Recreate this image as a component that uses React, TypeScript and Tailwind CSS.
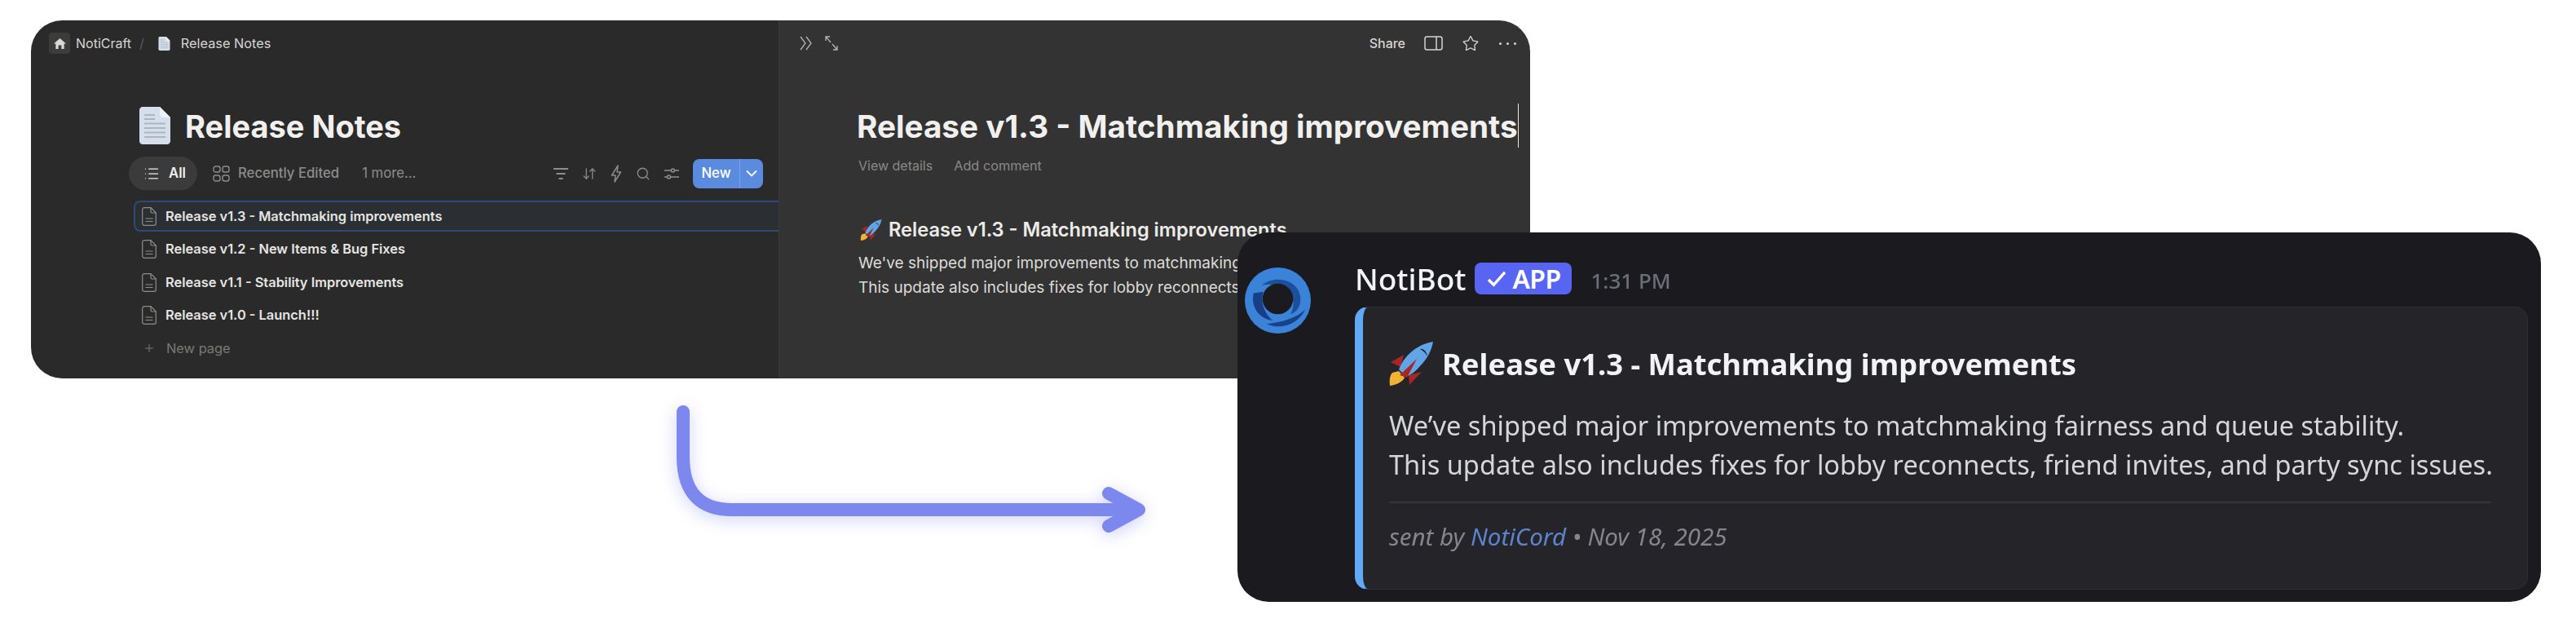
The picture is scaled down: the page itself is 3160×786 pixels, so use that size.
import React from "react";
import { ArrowDownUp, List, Plus, Search, Star } from "lucide-react";

const PageGlyph: React.FC<{ className: string }> = ({ className }) => (
  <svg viewBox="0 0 38 46" className={className}>
    <path d="M4 0H25L38 13V42C38 44.2 36.2 46 34 46H4C1.8 46 0 44.2 0 42V4C0 1.8 1.8 0 4 0Z" fill="#d5dee9" />
    <path d="M25 0L38 13H29C26.8 13 25 11.2 25 9V0Z" fill="#eef2f7" />
    <path d="M6 10H19M6 15H19M6 20.5H32M6 26H32M6 31.5H32M6 37H32" stroke="#aab6c6" strokeWidth="2" />
  </svg>
);

const RowDoc: React.FC = () => (
  <svg viewBox="0 0 18 23" fill="none" stroke="#8f8e8b" strokeWidth="1.2" className="h-[23px] w-[18px] shrink-0">
    <path d="M3 .7H11L17.3 7V20C17.3 21.3 16.3 22.3 15 22.3H3C1.7 22.3 .7 21.3 .7 20V3C.7 1.7 1.7 .7 3 .7Z" />
    <path d="M11 .7V5.5C11 6.4 11.6 7 12.5 7H17.3M4.5 14H13.5M4.5 17.5H13.5" />
  </svg>
);

const Rocket: React.FC<{ className: string }> = ({ className }) => (
  <svg viewBox="0 0 54 54" className={className}>
    <path d="M2 25L18 16L14 31Z" fill="#a52727" />
    <path d="M25 53L40 37L24 41Z" fill="#a52727" />
    <path d="M1 54C0 47 1 41 4 38L12 36L19 44C17 49 9 53 1 54Z" fill="#f2b233" />
    <path d="M54 0C41 2 29 9 20 20C16 25 14 29 12 34L21 43C27 40 32 37 37 31C47 21 52 11 54 0Z" fill="#62a5e6" />
    <path d="M34 21L13 41L22 44Z" fill="#a52727" />
    <path d="M38 9C42 8 46 12 47 18C45 14 42 11 38 9Z" fill="#1a1a20" />
  </svg>
);

const BotLogo: React.FC = () => (
  <svg viewBox="0 0 84 84" className="h-[83px] w-[83px] shrink-0">
    <circle cx="42" cy="41" r="41" fill="#3b83d8" />
    <path d="M22 22C34 12 56 12 66 26C74 38 70 54 58 58C64 46 62 32 50 26C40 21 30 20 22 22Z" fill="#1c4f9c" />
    <path d="M12 32C8 48 18 64 36 66C26 58 20 44 24 30Z" fill="#173f88" />
    <path d="M28 70C46 78 68 70 76 52C66 62 48 68 28 70Z" fill="#17428a" />
    <circle cx="42" cy="39" r="19" fill="#1a1a1f" />
  </svg>
);

const rows = [
  "Release v1.3 - Matchmaking improvements",
  "Release v1.2 - New Items & Bug Fixes",
  "Release v1.1 - Stability Improvements",
  "Release v1.0 - Launch!!!",
];

export default function App() {
  return (
    <div className="relative h-[786px] w-[3160px] overflow-hidden bg-white pl-[38px] pt-[25px] font-['Inter',sans-serif]">
      {/* Notion window */}
      <div className="flex h-[439px] w-[1839px] overflow-hidden rounded-[38px]">
        <div className="flex w-[917px] shrink-0 flex-col bg-[#2a2a2a] pt-[15px]">
          <div className="ml-[22px] flex h-[26px] items-center text-[16px] text-[#d6d5d2]">
            <span className="flex h-[26px] w-[26px] items-center justify-center rounded-[4px] bg-[#3c3c3c]">
              <svg viewBox="0 0 16 16" className="h-[15px] w-[15px]" fill="#d9d8d5">
                <path d="M8 1L16 8H13.5V15H10V10H6V15H2.5V8H0L8 1Z" />
              </svg>
            </span>
            <span className="ml-[7px]">NotiCraft</span>
            <span className="ml-[10px] text-[#5c5c5a]">/</span>
            <PageGlyph className="ml-[17px] h-[17px] w-[15px]" />
            <span className="ml-[13px] text-[16.3px]">Release Notes</span>
          </div>

          <div className="ml-[133px] mt-[65px] flex h-[46px] items-center gap-[18px]">
            <PageGlyph className="h-[46px] w-[38px]" />
            <h1 className="mt-[2px] text-[38px] font-bold leading-none text-[#f1f0ee]">Release Notes</h1>
          </div>

          <div className="ml-[120px] mr-[19px] mt-[15px] flex h-[41px] items-center text-[16.7px] text-[#8e8d8a]">
            <div className="flex h-[41px] w-[84px] items-center rounded-full bg-[#3b3b3b] pl-[18px] text-[#f1f0ee]">
              <List className="h-[20px] w-[20px]" strokeWidth={1.5} />
              <span className="ml-[11px] font-semibold">All</span>
            </div>
            <svg viewBox="0 0 21 20" fill="none" stroke="#8e8d8a" strokeWidth="1.4" className="ml-[19px] h-[20px] w-[21px]">
              <rect x="1" y="1" width="8" height="7" rx="2.5" />
              <rect x="12" y="1" width="8" height="7" rx="2.5" />
              <rect x="1" y="12" width="8" height="7" rx="2.5" />
              <rect x="12" y="12" width="8" height="7" rx="2.5" />
            </svg>
            <span className="ml-[10px] font-medium">Recently Edited</span>
            <span className="ml-[28px]">1 more...</span>

            <div className="ml-auto flex items-center gap-[17px] text-[#8e8d8a]">
              <svg viewBox="0 0 18 16" fill="none" stroke="currentColor" strokeWidth="2" className="h-[16px] w-[18px]">
                <path d="M0 2H18M3.5 8H14.5M6.5 14H11.5" />
              </svg>
              <ArrowDownUp className="h-[18px] w-[18px]" strokeWidth={1.7} />
              <svg viewBox="0 0 14 22" fill="none" stroke="currentColor" strokeWidth="1.5" strokeLinejoin="round" className="h-[22px] w-[14px]">
                <path d="M9 1L1.5 13H6L5 21L12.5 9H8Z" />
              </svg>
              <Search className="h-[18px] w-[18px]" strokeWidth={1.7} />
              <svg viewBox="0 0 18 16" fill="none" stroke="currentColor" strokeWidth="1.6" className="h-[16px] w-[18px]">
                <path d="M0 4H8M13 4H18M0 12H3M8 12H18" />
                <circle cx="10.5" cy="4" r="2" />
                <circle cx="5.5" cy="12" r="2" />
              </svg>
            </div>
            <div className="ml-[17px] flex h-[36px] w-[86px] items-center rounded-[8px] bg-[#5b8bde] font-medium text-white">
              <span className="w-[57px] text-center">New</span>
              <span className="flex h-full flex-1 items-center justify-center border-l border-[#7aa2e6]">
                <svg viewBox="0 0 14 9" fill="none" stroke="white" strokeWidth="1.8" className="h-[9px] w-[14px]">
                  <path d="M1 1.5L7 7.5L13 1.5" />
                </svg>
              </span>
            </div>
          </div>

          <div className="ml-[126px] mt-[13px] flex flex-col gap-[2.5px] text-[16.4px] font-semibold text-[#e6e5e2]">
            {rows.map((row, i) => (
              <div
                key={row}
                className={
                  i === 0
                    ? "flex h-[38px] items-center gap-[11px] rounded-l-[8px] border-y-2 border-l-2 border-[#2f4a78] bg-[#2b2e33] pl-[8px]"
                    : "flex h-[38px] items-center gap-[11px] pl-[10px]"
                }
              >
                <RowDoc />
                <span>{row}</span>
              </div>
            ))}
            <div className="flex h-[38px] items-center gap-[13px] pl-[11px] font-normal text-[#7a7977]">
              <Plus className="h-[16px] w-[16px]" strokeWidth={1.5} />
              <span>New page</span>
            </div>
          </div>
        </div>

        <div className="flex min-w-0 flex-1 flex-col border-l border-[#3a3a3a] bg-[#333333] pt-[15px]">
          <div className="flex h-[26px] items-center pl-[24px] pr-[17px] text-[#b4b3b0]">
            <svg viewBox="0 0 17 18" fill="none" stroke="currentColor" strokeWidth="1.3" className="h-[18px] w-[17px]">
              <path d="M2 1L8 9L2 17M9 1L15 9L9 17" />
            </svg>
            <svg viewBox="0 0 16 18" fill="none" stroke="currentColor" strokeWidth="1.3" className="ml-[15px] h-[18px] w-[16px]">
              <path d="M1 6V1H6M1 1L7 8M15 12V17H10M15 17L9 10" />
            </svg>
            <span className="ml-auto text-[16px] font-medium text-[#d6d5d2]">Share</span>
            <svg viewBox="0 0 23 18" fill="none" stroke="#d6d5d2" strokeWidth="1.5" className="ml-[23px] h-[18px] w-[23px]">
              <rect x="1" y="1" width="21" height="16" rx="2.5" />
              <path d="M15 1V17" />
            </svg>
            <Star className="ml-[23px] h-[21px] w-[22px] text-[#d6d5d2]" strokeWidth={1.5} />
            <span className="ml-[24px] flex gap-[6px]">
              <span className="h-[3px] w-[3px] rounded-full bg-[#d6d5d2]" />
              <span className="h-[3px] w-[3px] rounded-full bg-[#d6d5d2]" />
              <span className="h-[3px] w-[3px] rounded-full bg-[#d6d5d2]" />
            </span>
          </div>

          <div className="ml-[95px] mt-[61px] flex">
            <h2 className="border-r border-[#e8e8e8] pt-[2px] text-[38.7px] font-bold leading-[52px] whitespace-nowrap text-[#f1f0ee]">
              Release v1.3 - Matchmaking improvements
            </h2>
          </div>
          <div className="ml-[97px] mt-[10px] flex h-[24px] items-center gap-[26px] text-[16px] text-[#8a8987]">
            <span>View details</span>
            <span className="text-[16.3px]">Add comment</span>
          </div>
          <div className="ml-[99px] mt-[49px] flex h-[36px] items-center gap-[8px] text-[23.6px] font-semibold whitespace-nowrap text-[#ecebe8]">
            <Rocket className="h-[26px] w-[27px] shrink-0" />
            <span>Release v1.3 - Matchmaking improvements</span>
          </div>
          <div className="ml-[97px] mt-[8px] text-[19px] leading-[30px] whitespace-nowrap text-[#dcdbd8]">
            <p>We've shipped major improvements to matchmaking fairness and queue stability.</p>
            <p>This update also includes fixes for lobby reconnects, friend invites, and party sync issues.</p>
          </div>
        </div>
      </div>

      {/* connector arrow */}
      <svg
        viewBox="0 0 600 180"
        fill="none"
        stroke="#7d88ef"
        strokeWidth="16"
        strokeLinecap="round"
        strokeLinejoin="round"
        className="absolute left-[820px] top-[480px] h-[180px] w-[600px] overflow-visible drop-shadow-[0_4px_10px_rgba(88,101,242,0.3)]"
      >
        <path d="M18 25V80C18 125 40 145 78 145H574" />
        <path d="M540 125L577 145L540 165" />
      </svg>

      {/* Discord card */}
      <div className="absolute left-[1518px] top-[285px] flex h-[453px] w-[1599px] rounded-[38px] bg-[#1a1a1f] pl-[8px] pr-[16px] pt-[37px] font-['Noto_Sans',sans-serif]">
        <div className="mt-[6px]">
          <BotLogo />
        </div>
        <div className="ml-[53px] min-w-0 flex-1">
          <div className="flex h-[39px] items-center">
            <span className="text-[37px] leading-none font-medium text-[#f2f3f5] blur-[0.4px]">NotiBot</span>
            <span className="ml-[11px] flex h-[39px] w-[119px] items-center justify-center gap-[6px] rounded-[8px] bg-[#5865f2] text-[32px] font-semibold tracking-[-0.02em] text-white">
              <svg viewBox="0 0 26 22" fill="none" stroke="white" strokeWidth="3.8" className="h-[20px] w-[26px]">
                <path d="M2 12L9 19L24 2" />
              </svg>
              APP
            </span>
            <span className="ml-[23px] mt-[6px] text-[26px] font-medium text-[#6d6f78] blur-[0.4px]">1:31 PM</span>
          </div>

          <div className="mt-[15px] h-[347px] rounded-[16px] border border-[#2d2d33] border-l-[10px] border-l-[#62a9f5] bg-[#242429] pl-[32px] pr-[44px] pt-[42px]">
            <div className="flex h-[54px] items-center gap-[11px]">
              <Rocket className="h-[54px] w-[54px] shrink-0" />
              <span className="text-[36.4px] font-bold whitespace-nowrap text-[#f2f3f5] blur-[0.4px]">
                Release v1.3 - Matchmaking improvements
              </span>
            </div>
            <div className="mt-[25px] text-[32.6px] leading-[48px] whitespace-nowrap text-[#d4d6da] blur-[0.4px]">
              <p>We’ve shipped major improvements to matchmaking fairness and queue stability.</p>
              <p>This update also includes fixes for lobby reconnects, friend invites, and party sync issues.</p>
            </div>
            <div className="mt-[21px] h-[2px] bg-[#35363b]" />
            <div className="mt-[21px] text-[29.5px] leading-[40px] whitespace-nowrap text-[#85868d] italic blur-[0.4px]">
              sent by <span className="text-[#5c84cf]">NotiCord</span> • Nov 18, 2025
            </div>
          </div>
        </div>
      </div>
    </div>
  );
}
